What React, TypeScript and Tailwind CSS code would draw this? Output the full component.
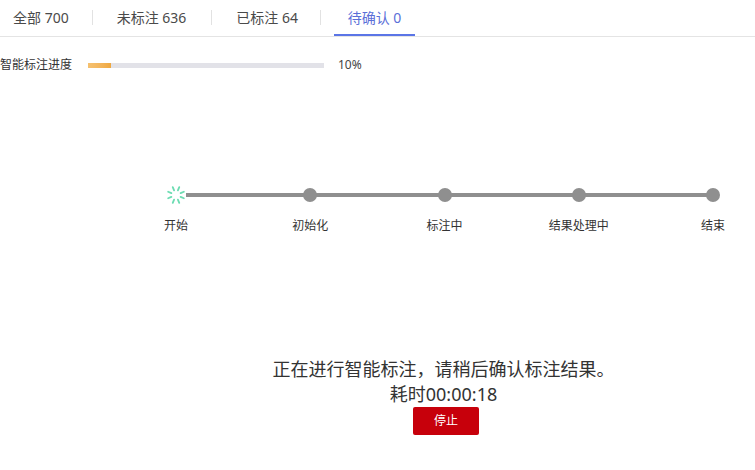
import { useEffect, useState } from 'react'

const TABS = [
  { label: '全部', count: 700 },
  { label: '未标注', count: 636 },
  { label: '已标注', count: 64 },
  { label: '待确认', count: 0 },
]

const STEPS = ['开始', '初始化', '标注中', '结果处理中', '结束']

function Spinner() {
  return (
    <svg width="20" height="20" viewBox="0 0 20 20" className="bg-white">
      {Array.from({ length: 8 }).map((_, i) => {
        const a = ((i * 45 + 22.5) * Math.PI) / 180
        return (
          <line
            key={i}
            x1={10 + Math.cos(a) * 5}
            y1={10 + Math.sin(a) * 5}
            x2={10 + Math.cos(a) * 8.5}
            y2={10 + Math.sin(a) * 8.5}
            stroke="#6cdcb2"
            strokeWidth="1.8"
            strokeLinecap="round"
          />
        )
      })}
    </svg>
  )
}

export default function App() {
  const [active] = useState(3)
  const [seconds, setSeconds] = useState(18)

  useEffect(() => {
    const t = setInterval(() => setSeconds((s) => s), 1000)
    return () => clearInterval(t)
  }, [])

  const mm = String(Math.floor(seconds / 60)).padStart(2, '0')
  const ss = String(seconds % 60).padStart(2, '0')

  return (
    <div
      className="w-[755px] h-[470px] bg-white text-[#333] overflow-hidden"
      style={{ fontFamily: '"Noto Sans", "Noto Sans CJK SC", sans-serif' }}
    >
      {/* tabs */}
      <div className="flex items-end h-[37px] border-b border-[#e4e4e4]">
        {TABS.map((t, i) => (
          <div key={t.label} className="flex items-center h-full">
            {i > 0 && <span className="w-px h-[15px] bg-[#e2e2e2] mb-[2px]" />}
            <div
              className={
                'h-full flex items-center text-[14px] border-b-2 ' +
                (i === 0 ? 'ml-[13px] mr-[23px] ' : i === 1 ? 'ml-[24px] mr-[25px] ' : i === 2 ? 'ml-[24px] mr-[22px] ' : 'ml-[13px] px-0 ') +
                (i === active ? 'border-[#5b75e6] text-[#5b6fd8] w-[81px] justify-center' : 'border-transparent text-[#4a4a4a]')
              }
            >
              {t.label} {t.count}
            </div>
          </div>
        ))}
      </div>

      {/* progress */}
      <div className="flex items-center mt-[20px] h-[16px] text-[12px]">
        <span className="w-[88px] text-[#333]">智能标注进度</span>
        <div className="w-[236px] h-[5px] bg-[#e2e2e8]">
          <div className="w-[23px] h-full bg-gradient-to-r from-[#f5c170] via-[#f3b65d] to-[#efa83f]" />
        </div>
        <span className="ml-[14px] text-[#444]">10%</span>
      </div>

      {/* stepper */}
      <div className="relative ml-[136px] w-[617px] mt-[112px]">
        <div className="absolute left-[48px] right-[40px] top-[8px] h-[4px] bg-[#8f8f8f]" />
        <div className="relative flex justify-between">
          {STEPS.map((s, i) => (
            <div key={s} className="w-[80px] flex flex-col items-center">
              <div className="h-[20px] flex items-center justify-center">
                {i === 0 ? (
                  <Spinner />
                ) : (
                  <span className="w-[14px] h-[14px] rounded-full bg-[#8f8f8f]" />
                )}
              </div>
              <span className="mt-[13px] text-[12px] text-[#333] leading-[16px]">{s}</span>
            </div>
          ))}
        </div>
      </div>

      {/* status */}
      <div className="flex flex-col items-center ml-[135px] w-[617px] mt-[122px]">
        <p className="text-[18px] leading-[26px] text-[#333]">正在进行智能标注，请稍后确认标注结果。</p>
        <p className="text-[18px] leading-[24px] text-[#333]">
          耗时00:{mm}:{ss}
        </p>
        <button
          type="button"
          className="mt-[1px] ml-[5px] w-[66px] h-[28px] rounded-[2px] bg-[#c7000b] text-white text-[12px]"
        >
          停止
        </button>
      </div>
    </div>
  )
}
